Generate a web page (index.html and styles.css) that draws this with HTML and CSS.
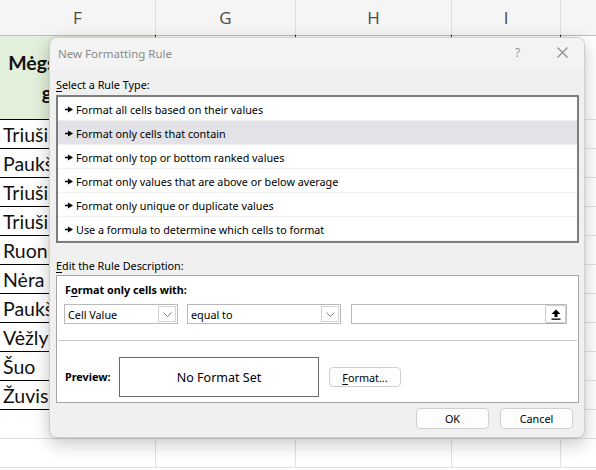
FILE: index.html
```html
<!DOCTYPE html>
<html>
<head>
<meta charset="utf-8">
<link rel="stylesheet" href="styles.css">
</head>
<body>
<div class="sheet">
  <div class="row hdr">
    <div class="hc">F</div><div class="hc">G</div><div class="hc">H</div><div class="hc">I</div><div class="hc last"></div>
  </div>
  <div class="row title-row">
    <div class="c f green"><span>Mėgstamiausias<br>gyvūnas</span></div><div class="c"></div><div class="c"></div><div class="c"></div><div class="c last"></div>
  </div>
  <div class="row"><div class="c f">Triušis</div><div class="c"></div><div class="c"></div><div class="c"></div><div class="c last"></div></div>
  <div class="row"><div class="c f">Paukštis</div><div class="c"></div><div class="c"></div><div class="c"></div><div class="c last"></div></div>
  <div class="row"><div class="c f">Triušis</div><div class="c"></div><div class="c"></div><div class="c"></div><div class="c last"></div></div>
  <div class="row"><div class="c f">Triušis</div><div class="c"></div><div class="c"></div><div class="c"></div><div class="c last"></div></div>
  <div class="row"><div class="c f">Ruonis</div><div class="c"></div><div class="c"></div><div class="c"></div><div class="c last"></div></div>
  <div class="row"><div class="c f">Nėra</div><div class="c"></div><div class="c"></div><div class="c"></div><div class="c last"></div></div>
  <div class="row"><div class="c f">Paukštis</div><div class="c"></div><div class="c"></div><div class="c"></div><div class="c last"></div></div>
  <div class="row"><div class="c f">Vėžlys</div><div class="c"></div><div class="c"></div><div class="c"></div><div class="c last"></div></div>
  <div class="row"><div class="c f">Šuo</div><div class="c"></div><div class="c"></div><div class="c"></div><div class="c last"></div></div>
  <div class="row"><div class="c f">Žuvis</div><div class="c"></div><div class="c"></div><div class="c"></div><div class="c last"></div></div>
  <div class="row"><div class="c"></div><div class="c"></div><div class="c"></div><div class="c"></div><div class="c last"></div></div>
  <div class="row"><div class="c"></div><div class="c"></div><div class="c"></div><div class="c"></div><div class="c last"></div></div>
</div>

<div class="dialog">
  <div class="titlebar">
    <span class="title">New Formatting Rule</span>
    <span class="help">?</span>
    <svg class="close" width="11" height="11" viewBox="0 0 11 11"><path d="M0.5 0.5L10.5 10.5M10.5 0.5L0.5 10.5" stroke="#8a8a8a" stroke-width="1.1" fill="none"/></svg>
  </div>
  <div class="body">
    <div class="label"><u>S</u>elect a Rule Type:</div>
    <div class="list">
      <div class="item"><svg class="arr" width="8" height="7" viewBox="0 0 8 7"><path d="M0 3.5H4" stroke="#000" stroke-width="1.5"/><path d="M3 0.5L8 3.5L3 6.5Z" fill="#000"/></svg><span>Format all cells based on their values</span></div>
      <div class="item sel"><svg class="arr" width="8" height="7" viewBox="0 0 8 7"><path d="M0 3.5H4" stroke="#000" stroke-width="1.5"/><path d="M3 0.5L8 3.5L3 6.5Z" fill="#000"/></svg><span>Format only cells that contain</span></div>
      <div class="item"><svg class="arr" width="8" height="7" viewBox="0 0 8 7"><path d="M0 3.5H4" stroke="#000" stroke-width="1.5"/><path d="M3 0.5L8 3.5L3 6.5Z" fill="#000"/></svg><span>Format only top or bottom ranked values</span></div>
      <div class="item"><svg class="arr" width="8" height="7" viewBox="0 0 8 7"><path d="M0 3.5H4" stroke="#000" stroke-width="1.5"/><path d="M3 0.5L8 3.5L3 6.5Z" fill="#000"/></svg><span>Format only values that are above or below average</span></div>
      <div class="item"><svg class="arr" width="8" height="7" viewBox="0 0 8 7"><path d="M0 3.5H4" stroke="#000" stroke-width="1.5"/><path d="M3 0.5L8 3.5L3 6.5Z" fill="#000"/></svg><span>Format only unique or duplicate values</span></div>
      <div class="item"><svg class="arr" width="8" height="7" viewBox="0 0 8 7"><path d="M0 3.5H4" stroke="#000" stroke-width="1.5"/><path d="M3 0.5L8 3.5L3 6.5Z" fill="#000"/></svg><span>Use a formula to determine which cells to format</span></div>
    </div>
    <div class="label label2"><u>E</u>dit the Rule Description:</div>
    <div class="desc">
      <div class="cond">
        <div class="bold">F<u>o</u>rmat only cells with:</div>
        <div class="ctrls">
          <div class="select s1"><span class="val">Cell Value</span><span class="dd"><svg width="9" height="5" viewBox="0 0 9 5"><path d="M0.5 0.5L4.5 4.5L8.5 0.5" stroke="#777" fill="none" stroke-width="0.9"/></svg></span></div>
          <div class="select s2"><span class="val">equal to</span><span class="dd"><svg width="9" height="5" viewBox="0 0 9 5"><path d="M0.5 0.5L4.5 4.5L8.5 0.5" stroke="#777" fill="none" stroke-width="0.9"/></svg></span></div>
          <div class="input"><span class="val"></span><span class="up"><svg width="10" height="11" viewBox="0 0 10 11"><path d="M5 0.5L9.5 5H6.5V8H3.5V5H0.5Z" fill="#000"/><rect x="0.5" y="9.5" width="9" height="1.3" fill="#000"/></svg></span></div>
        </div>
      </div>
      <div class="sep"></div>
      <div class="preview">
        <span class="bold plabel">Preview:</span>
        <div class="pbox">No Format Set</div>
        <button class="btn fmt"><u>F</u>ormat...</button>
      </div>
    </div>
    <div class="actions">
      <button class="btn ok">OK</button>
      <button class="btn cancel">Cancel</button>
    </div>
  </div>
</div>
</body>
</html>
```

FILE: styles.css
```css
html, body {
  margin: 0;
  padding: 0;
  width: 596px;
  height: 470px;
  overflow: hidden;
  background: #ffffff;
}

.sheet {
  width: 596px;
}

.row {
  display: grid;
  grid-template-columns: 156px 140px 156px 109px 1fr;
  height: 29px;
}

.hdr {
  height: 35px;
  background: #f5f5f5;
  border-bottom: 1px solid #bdbdbd;
}

.hc {
  position: relative;
  border-right: 1px solid #dcdcdc;
  font-family: "Open Sans", "Noto Sans", sans-serif;
  font-size: 17px;
  color: #4a4a4a;
  display: flex;
  align-items: center;
  justify-content: center;
}

.hc::after {
  content: "";
  position: absolute;
  right: -1px;
  bottom: -3px;
  width: 1px;
  height: 3px;
  background: #222;
}

.hc.last {
  border-right: none;
}

.hc.last::after {
  display: none;
}

.title-row {
  height: 84px;
}

.c {
  border-right: 1px solid #e1e1e1;
  border-bottom: 1px solid #e1e1e1;
  font-family: "Lato", "Liberation Sans", sans-serif;
  font-size: 19.5px;
  color: #111;
  display: flex;
  align-items: center;
  padding-left: 3px;
  white-space: nowrap;
  overflow: hidden;
}

.c.last {
  border-right: none;
}

.c.f {
  border-bottom: 1px solid #000;
}

.green {
  background: #e2efda;
  justify-content: center;
  text-align: center;
  padding-left: 0;
  font-weight: bold;
  line-height: 30px;
}

/* Dialog window */
.dialog {
  position: absolute;
  left: 49px;
  top: 37px;
  width: 534px;
  height: 399px;
  background: #f0f0f0;
  border: 1px solid #cfcfcf;
  border-radius: 8px;
  box-shadow: 0 6px 18px rgba(0, 0, 0, 0.22), 0 0 3px rgba(0, 0, 0, 0.08);
  font-family: "Noto Sans", "Open Sans", sans-serif;
  font-size: 10.8px;
  color: #000;
  overflow: hidden;
}

.titlebar {
  height: 31px;
  background: #f3f3f3;
  display: flex;
  align-items: center;
  padding-left: 8px;
}

.title {
  flex: 1;
  color: #8a8a8a;
  font-size: 11.5px;
  margin-top: 0;
}

.help {
  color: #9a9a9a;
  font-size: 12px;
  width: 12px;
  margin-right: 30px;
  margin-top: -2px;
}

.close {
  margin-right: 16px;
  margin-top: -2px;
}

.body {
  padding: 0 5px 0 6px;
}

.label {
  line-height: 16px;
  margin-top: 8px;
  margin-bottom: 2px;
}

.label u, .bold u, .btn u {
  text-decoration: underline;
  text-underline-offset: 2px;
}

.label2 {
  margin-top: 15px;
  margin-bottom: 1px;
}

.list {
  border: 2px solid #7d7d7d;
  background: #fff;
}

.item {
  box-sizing: border-box;
  height: 24px;
  border-bottom: 1px solid #f0f0f0;
  display: flex;
  align-items: center;
  padding-left: 7px;
  padding-top: 2px;
}

.item:last-child {
  border-bottom: 1px solid #f4f4f4;
}

.item.sel {
  background: #e2e2e7;
}

.arr {
  margin-right: 3px;
  margin-top: -1px;
  flex: none;
}

.desc {
  border: 1px solid #a5a5a5;
  background: #fff;
}

.cond {
  padding: 6px 7px 16px 7px;
}

.bold {
  font-weight: bold;
  line-height: 16px;
  padding-left: 1px;
}

.ctrls {
  display: flex;
  margin-top: 6px;
  height: 20px;
}

.select, .input {
  box-sizing: border-box;
  height: 20px;
  border: 1px solid #b9b9b9;
  display: flex;
  align-items: stretch;
  background: #fff;
}

.select .val, .input .val {
  flex: 1;
  display: flex;
  align-items: center;
  padding-left: 3px;
}

.s1 {
  width: 114px;
}

.s2 {
  width: 154px;
  margin-left: 9px;
}

.input {
  width: 216px;
  margin-left: 10px;
}

.dd {
  width: 16px;
  border: 1px solid #d4d4d4;
  margin: 1px;
  display: flex;
  align-items: center;
  justify-content: center;
}

.up {
  width: 19px;
  border: 1px solid #cfcfcf;
  border-radius: 2px;
  display: flex;
  align-items: center;
  justify-content: center;
  box-shadow: 0 1px 1px rgba(0,0,0,0.1);
}

.sep {
  height: 1px;
  background: #c8c8c8;
  margin: 0 1px;
}

.preview {
  display: flex;
  align-items: center;
  padding: 16px 7px 5px 8px;
}

.plabel {
  width: 54px;
  padding-left: 0;
}

.pbox {
  box-sizing: border-box;
  width: 200px;
  height: 40px;
  border: 1px solid #6a6a6a;
  display: flex;
  align-items: center;
  justify-content: center;
  font-size: 12.5px;
}

.btn {
  box-sizing: border-box;
  font-family: "Noto Sans", "Open Sans", sans-serif;
  font-size: 10.8px;
  color: #000;
  background: #fdfdfd;
  border: 1px solid #d0d0d0;
  border-radius: 4px;
  height: 21px;
  padding: 0;
  margin: 0;
}

.fmt {
  width: 72px;
  height: 20px;
  margin-left: 10px;
}

.actions {
  display: flex;
  justify-content: flex-end;
  gap: 11px;
  margin-top: 5px;
  padding-right: 6px;
}

.ok, .cancel {
  width: 73px;
}
```
